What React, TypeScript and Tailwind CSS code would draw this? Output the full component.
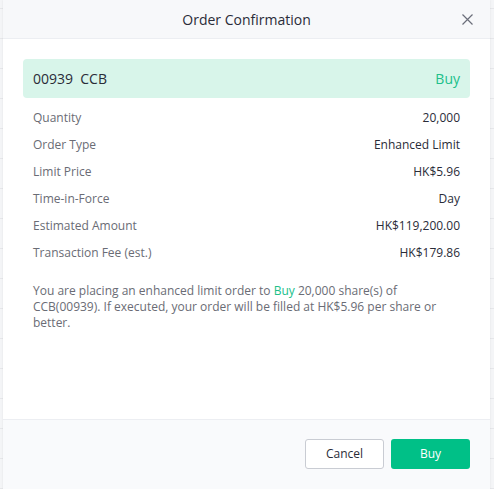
import React from 'react';

const rows: [string, string][] = [
  ['Quantity', '20,000'],
  ['Order Type', 'Enhanced Limit'],
  ['Limit Price', 'HK$5.96'],
  ['Time-in-Force', 'Day'],
  ['Estimated Amount', 'HK$119,200.00'],
  ['Transaction Fee (est.)', 'HK$179.86'],
];

export default function App() {
  return (
    <div
      className="h-[489px] w-[494px] overflow-hidden bg-[#f4f5f7] bg-[repeating-linear-gradient(to_bottom,transparent_0px,transparent_8px,#e6e7ea_8px,#e6e7ea_9px,transparent_9px,transparent_30px)] pl-[3px] pr-[4px] font-['Open_Sans',sans-serif]"
    >
      <div className="flex h-full w-[487px] flex-col bg-white shadow-[0_0_2px_rgba(0,0,0,0.08)]">
        {/* header */}
        <div className="relative flex h-[39px] shrink-0 items-center justify-center border-b border-[#eceef2] bg-[#f7f8fa]">
          <span className="text-[14px] text-[#2a2c38]">Order Confirmation</span>
          <button className="absolute right-[17px] top-[14px] text-[#6b6e7a]">
            <svg width="11" height="11" viewBox="0 0 11 11" fill="none" stroke="currentColor" strokeWidth="1.2">
              <path d="M0.5 0.5L10.5 10.5M10.5 0.5L0.5 10.5" />
            </svg>
          </button>
        </div>

        {/* body */}
        <div className="flex flex-1 flex-col px-[20px] pt-[20px]">
          <div className="flex h-[39px] items-center justify-between rounded-[4px] bg-[#d8f5ea] px-[10px]">
            <span className="text-[14px] text-[#2a2c38]">00939&nbsp;&nbsp;CCB</span>
            <span className="text-[14px] text-[#20c08a]">Buy</span>
          </div>

          <div className="mt-[6px] flex flex-col px-[10px]">
            {rows.map(([label, value]) => (
              <div key={label} className="flex h-[27px] items-center justify-between text-[12px]">
                <span className="text-[#6a6c75]">{label}</span>
                <span className="text-[#2a2c38]">{value}</span>
              </div>
            ))}
          </div>

          <p className="mt-[17px] px-[10px] text-[12px] leading-[16px] text-[#6a6c75]">
            You are placing an enhanced limit order to <span className="text-[#20c08a]">Buy</span> 20,000 share(s) of
            CCB(00939). If executed, your order will be filled at HK$5.96 per share or better.
          </p>
        </div>

        {/* footer */}
        <div className="flex h-[70px] shrink-0 items-start justify-end gap-[7px] border-t border-[#eceef2] bg-[#f9fafc] pr-[20px] pt-[19px]">
          <button className="h-[30px] w-[79px] rounded-[3px] border border-[#c9ccd3] bg-white text-[12px] text-[#2a2c38]">
            Cancel
          </button>
          <button className="h-[30px] w-[79px] rounded-[3px] bg-[#00c087] text-[12px] text-white">Buy</button>
        </div>
      </div>
    </div>
  );
}
